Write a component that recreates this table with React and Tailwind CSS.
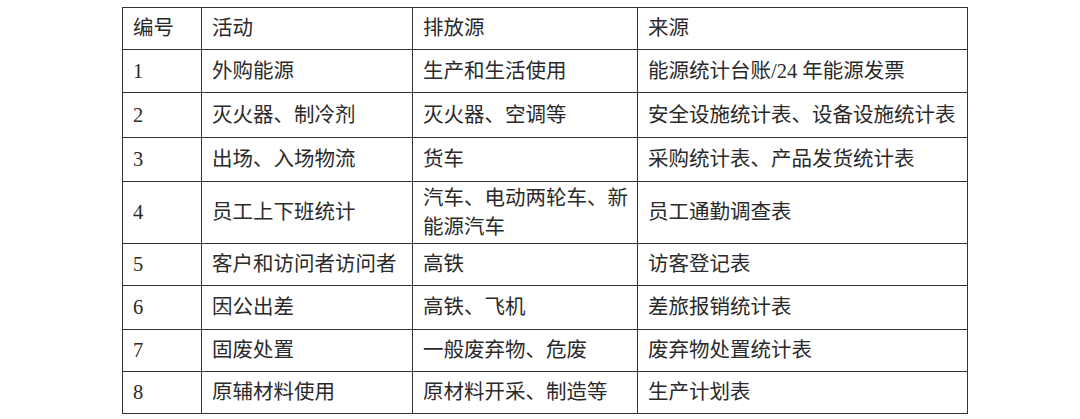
import React from "react";

const rows = [
  ["编号", "活动", "排放源", "来源", "h-[42px]"],
  ["1", "外购能源", "生产和生活使用", "能源统计台账/24 年能源发票", "h-[43px]"],
  ["2", "灭火器、制冷剂", "灭火器、空调等", "安全设施统计表、设备设施统计表", "h-[45px]"],
  ["3", "出场、入场物流", "货车", "采购统计表、产品发货统计表", "h-[44px]"],
  ["4", "员工上下班统计", "汽车、电动两轮车、新能源汽车", "员工通勤调查表", "h-[62px]"],
  ["5", "客户和访问者访问者", "高铁", "访客登记表", "h-[42px]"],
  ["6", "因公出差", "高铁、飞机", "差旅报销统计表", "h-[44px]"],
  ["7", "固废处置", "一般废弃物、危废", "废弃物处置统计表", "h-[42px]"],
  ["8", "原辅材料使用", "原材料开采、制造等", "生产计划表", "h-[42px]"],
];

export default function App() {
  const cell = "border-[1.5px] border-[#333] pl-[10px] pr-[4px] align-middle";
  return (
    <div className="w-[1080px] h-[419px] bg-white pt-[7px] pl-[122px] overflow-hidden">
      <table
        className="border-collapse table-fixed w-[845px] text-[20.5px] leading-[29px] text-[#2a2a2a]"
        style={{ fontFamily: '"Liberation Serif", "Noto Sans CJK SC", serif' }}
      >
        <colgroup>
          <col className="w-[79px]" />
          <col className="w-[211px]" />
          <col className="w-[225px]" />
          <col className="w-[330px]" />
        </colgroup>
        <tbody>
          {rows.map((r, i) => (
            <tr key={i} className={r[4]}>
              <td className={cell}>{r[0]}</td>
              <td className={cell}>{r[1]}</td>
              <td className={cell}>{r[2]}</td>
              <td className={cell}>{r[3]}</td>
            </tr>
          ))}
        </tbody>
      </table>
    </div>
  );
}
